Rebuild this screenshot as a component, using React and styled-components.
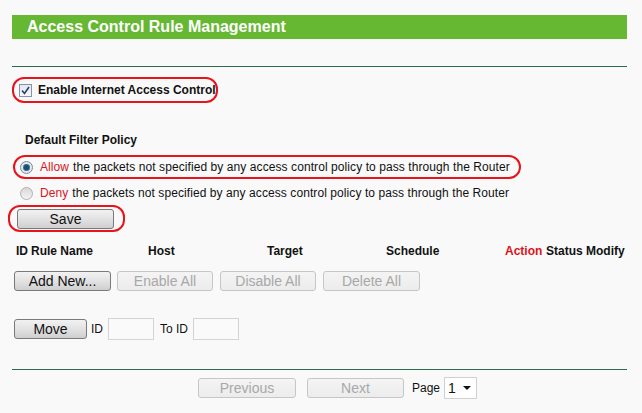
import React from 'react';
import styled, { createGlobalStyle } from 'styled-components';

const Global = createGlobalStyle`
  html, body {
    margin: 0;
    padding: 0;
    background: #f9f9f9;
    font-family: "Liberation Sans", Arial, sans-serif;
    font-size: 12px;
    color: #111;
  }
`;

const Page = styled.div`
  width: 615px;
  padding: 15px 15px 0 12px;
  white-space: nowrap;
`;

const TitleBar = styled.div`
  height: 24px;
  background: #66b832;
  color: #fff;
  font-weight: bold;
  font-size: 16px;
  line-height: 24px;
  padding-left: 15px;
`;

const Divider = styled.div`
  height: 1px;
  background: #2d6a4f;
  margin-top: ${p => p.top}px;
`;

const Highlight = styled.div`
  display: flex;
  align-items: center;
  box-sizing: border-box;
  border: 2px solid #e8141b;
  border-radius: 12px;
  width: ${p => p.w}px;
  height: ${p => p.h}px;
  margin-top: ${p => p.top}px;
  margin-left: ${p => p.left || 0}px;
  padding-left: ${p => p.pad}px;
  letter-spacing: ${p => (p.wide ? '0.08px' : '0')};
`;

const Line = styled.div`
  display: flex;
  align-items: center;
  height: ${p => p.h || 16}px;
  margin-top: ${p => p.top}px;
  padding-left: ${p => p.pad || 0}px;
  font-weight: ${p => (p.bold ? 'bold' : 'normal')};
  letter-spacing: ${p => (p.wide ? '0.08px' : '0')};
`;

const CheckBox = styled.span`
  width: 11px;
  height: 11px;
  border: 1px solid #8494ad;
  background: linear-gradient(#e4e7ec, #f7f8fa);
  display: inline-flex;
  align-items: center;
  justify-content: center;
  margin-right: 6px;
  flex: none;
`;

const Radio = styled.span`
  width: 11px;
  height: 11px;
  border: 1px solid ${p => (p.on ? '#7f8a96' : '#b0b0b0')};
  border-radius: 50%;
  background: ${p => (p.on ? 'radial-gradient(circle, #1d4f73 0 2.5px, #6a98b8 3.5px, #e3e8ec 4px)' : 'linear-gradient(#d8d8d8, #f4f4f4)')};
  margin-right: 7px;
  flex: none;
`;

const Red = styled.span`
  color: #d8151c;
  margin-right: 4px;
`;

const Button = styled.button`
  font-family: "Liberation Sans", Arial, sans-serif;
  font-size: 14px;
  box-sizing: border-box;
  width: ${p => p.w}px;
  height: ${p => p.h || 20}px;
  margin-right: ${p => p.gap || 0}px;
  padding: 0;
  border-radius: 3px;
  border: 1px solid ${p => (p.off ? '#c6c6c6' : '#7a7a7a')};
  color: ${p => (p.off ? '#a8a8a8' : '#111')};
  background: ${p => (p.off ? 'linear-gradient(#f4f4f4, #ececec)' : 'linear-gradient(#f2f2f2 0%, #e2e2e2 50%, #cfcfcf 100%)')};
  flex: none;
`;

const HeadRow = styled.div`
  display: grid;
  grid-template-columns: 15px 117px 119px 119px 119px 41px 40px auto;
  padding-left: 4px;
  margin-top: 12px;
  height: 14px;
  font-weight: bold;
  align-items: center;
`;

const Col = styled.span`
  color: ${p => (p.red ? '#d8151c' : '#111')};
`;

const Row = styled.div`
  display: flex;
  align-items: center;
  margin-top: ${p => p.top}px;
  margin-left: ${p => p.left || 0}px;
  height: ${p => p.h}px;
`;

const Label = styled.span`
  margin: 0 ${p => p.r || 0}px 0 ${p => p.l || 0}px;
`;

const Field = styled.span`
  box-sizing: border-box;
  width: 46px;
  height: 22px;
  border: 1px solid #d4d4d4;
  background: #fafafa;
  margin-right: 6px;
`;

const Select = styled.span`
  box-sizing: border-box;
  width: 33px;
  height: 22px;
  border: 1px solid #d0d0d0;
  background: #fff;
  display: inline-flex;
  align-items: center;
  justify-content: space-between;
  padding: 0 5px 0 3px;
  font-size: 14px;
  margin-left: 4px;
`;

const Caret = styled.span`
  width: 0;
  height: 0;
  border-left: 4px solid transparent;
  border-right: 4px solid transparent;
  border-top: 4px solid #111;
`;

const policy = 'the packets not specified by any access control policy to pass through the Router';

export default function App() {
  return (
    <Page>
      <Global />
      <TitleBar>Access Control Rule Management</TitleBar>
      <Divider top={27} />

      <Highlight w={206} h={26} top={10} pad={5}>
        <CheckBox>
          <svg width="9" height="9" viewBox="0 0 9 9">
            <path d="M1 4.5 L3.5 7.5 L8 1" fill="none" stroke="#2b3f73" strokeWidth="1.6" />
          </svg>
        </CheckBox>
        <b>Enable Internet Access Control</b>
      </Highlight>

      <Line top={29} pad={13} bold>Default Filter Policy</Line>

      <Highlight w={508} h={24} top={7} left={1} pad={5} wide>
        <Radio on />
        <Red>Allow</Red>
        {policy}
      </Highlight>

      <Line top={6} pad={8} wide>
        <Radio />
        <Red>Deny</Red>
        {policy}
      </Line>

      <Highlight w={117} h={27} top={4} left={-4} pad={7}>
        <Button w={97}>Save</Button>
      </Highlight>

      <HeadRow>
        <Col>ID</Col>
        <Col>Rule Name</Col>
        <Col>Host</Col>
        <Col>Target</Col>
        <Col>Schedule</Col>
        <Col red>Action</Col>
        <Col>Status</Col>
        <Col>Modify</Col>
      </HeadRow>

      <Row top={13} left={2} h={20}>
        <Button w={97} gap={6}>Add New...</Button>
        <Button w={96} gap={7} off>Enable All</Button>
        <Button w={96} gap={7} off>Disable All</Button>
        <Button w={97} off>Delete All</Button>
      </Row>

      <Row top={27} left={2} h={22}>
        <Button w={73}>Move</Button>
        <Label l={4} r={5}>ID</Label>
        <Field />
        <Label r={5}>To ID</Label>
        <Field />
      </Row>

      <Divider top={29} />

      <Row top={7} left={186} h={22}>
        <Button w={98} gap={11} off>Previous</Button>
        <Button w={97} gap={8} off>Next</Button>
        <Label>Page</Label>
        <Select>1<Caret /></Select>
      </Row>
    </Page>
  );
}
